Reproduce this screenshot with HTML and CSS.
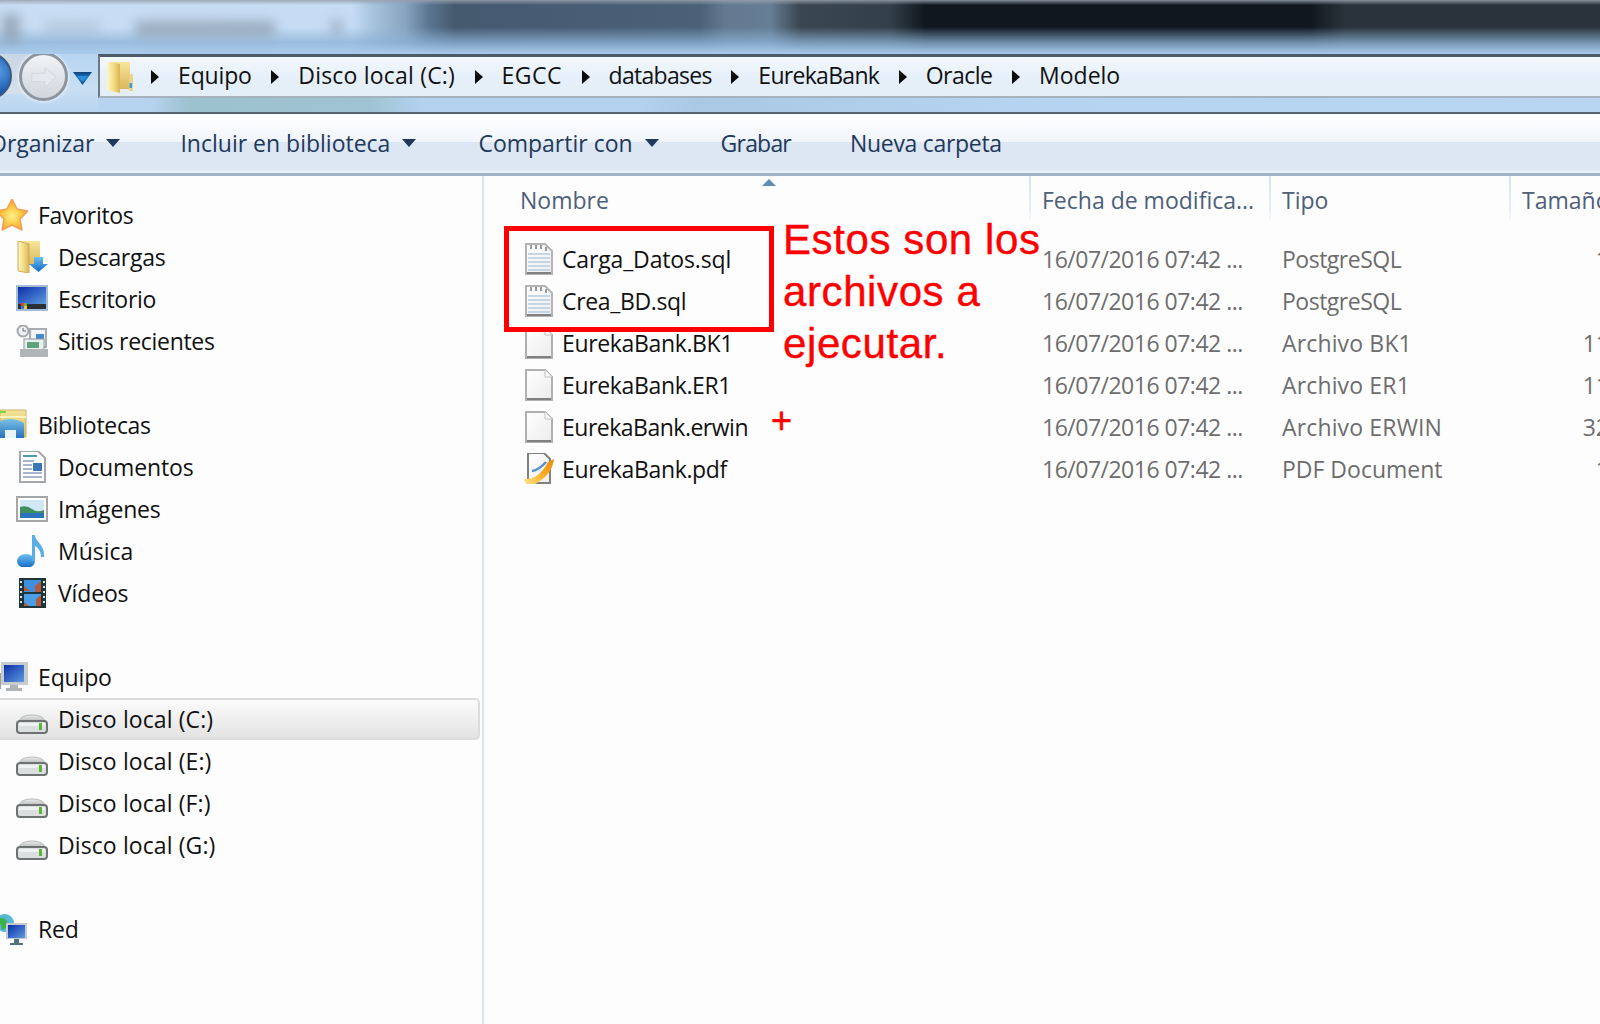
FILE: index.html
```html
<!DOCTYPE html>
<html lang="es">
<head>
<meta charset="utf-8">
<title>Modelo</title>
<link rel="stylesheet" href="styles.css">
</head>
<body>
<svg class="defs" width="0" height="0" aria-hidden="true">
  <defs>
    <linearGradient id="gFolder" x1="0" y1="0" x2="0" y2="1"><stop offset="0" stop-color="#f6e59a"/><stop offset="1" stop-color="#dcb75c"/></linearGradient>
    <linearGradient id="gFolderD" x1="0" y1="0" x2="1" y2="0"><stop offset="0" stop-color="#fff6c8"/><stop offset=".5" stop-color="#f4dd85"/><stop offset="1" stop-color="#d9b558"/></linearGradient>
    <radialGradient id="gStar" cx=".5" cy=".55" r=".55"><stop offset="0" stop-color="#fff28a"/><stop offset=".6" stop-color="#fcc23a"/><stop offset="1" stop-color="#f2923a"/></radialGradient>
    <linearGradient id="gScreen" x1="0" y1="0" x2="1" y2="1"><stop offset="0" stop-color="#0c2fa8"/><stop offset="1" stop-color="#5d9be0"/></linearGradient>
    <linearGradient id="gBlue" x1="0" y1="0" x2="0" y2="1"><stop offset="0" stop-color="#6cc0f2"/><stop offset="1" stop-color="#1268c4"/></linearGradient>
    <linearGradient id="gDisk" x1="0" y1="0" x2="0" y2="1"><stop offset="0" stop-color="#eeeeee"/><stop offset="1" stop-color="#a8acac"/></linearGradient>
    <linearGradient id="gPage" x1="0" y1="0" x2="1" y2="1"><stop offset="0" stop-color="#ffffff"/><stop offset="1" stop-color="#ececec"/></linearGradient>
    <linearGradient id="gSwoosh" x1="0" y1="1" x2="1" y2="0"><stop offset="0" stop-color="#ffe68a"/><stop offset=".55" stop-color="#f9a91c"/><stop offset="1" stop-color="#e98a10"/></linearGradient>
    <linearGradient id="gHist" x1="0" y1="0" x2="0" y2="1"><stop offset="0" stop-color="#10407e"/><stop offset=".45" stop-color="#1c78c4"/><stop offset="1" stop-color="#0f4a8c"/></linearGradient>
    <symbol id="i-star" viewBox="0 0 32 32"><path d="M16 0 L21 10 L32 12 L24 20 L26 31 L16 26 L6 31 L8 20 L0 12 L11 10 Z" fill="url(#gStar)" stroke="#f0a05a" stroke-width="1.500" stroke-linejoin="round"/></symbol>
    <symbol id="i-dl" viewBox="0 0 32 32"><path d="M2 0H24V24H2Z" fill="url(#gFolder)"/><path d="M2 0L13 3V32L2 30Z" fill="url(#gFolderD)" stroke="#cfae5c"/><path d="M18 16H27V23H32L22.500 31L13 23H18Z" fill="url(#gBlue)"/></symbol>
    <symbol id="i-desk" viewBox="0 0 32 32"><rect x="0" y="2" width="32" height="26" fill="#a7bdd6"/><rect x="2" y="4" width="28" height="17" fill="url(#gScreen)"/><rect x="2" y="21" width="28" height="5" fill="#2b2f36"/><rect x="5" y="20" width="3" height="3" fill="#e8402a"/><rect x="8" y="20" width="3" height="3" fill="#62b83a"/><rect x="5" y="23" width="3" height="3" fill="#2f7be0"/><rect x="8" y="23" width="3" height="3" fill="#f4c52a"/></symbol>
    <symbol id="i-recent" viewBox="0 0 32 32"><rect x="14" y="4" width="16" height="18" fill="#f2f5f7" stroke="#a8adb0" stroke-width="2"/><rect x="20" y="9" width="8" height="5" fill="#3f8ad0"/><circle cx="7" cy="6" r="5.500" fill="#eef0f2" stroke="#a4a8ab" stroke-width="2"/><path d="M7 3V6H10" fill="none" stroke="#6a6e72"/><rect x="8" y="14" width="20" height="11" fill="#e8f0f0" stroke="#8e9698"/><rect x="11" y="17" width="12" height="6" fill="#5fa27c"/><rect x="4" y="24" width="28" height="8" fill="#b2b5b7"/></symbol>
    <symbol id="i-lib" viewBox="0 0 32 32"><path d="M4 1H30V28H4Z" fill="url(#gFolder)" stroke="#cbb26a"/><rect x="4" y="2" width="6" height="2" fill="#7ad83a"/><path d="M4 8H30" stroke="#fff4c0" stroke-width="2"/><path d="M0 14Q14 6 28 14V29H20V21H9V29H0Z" fill="url(#gBlue)" opacity=".9"/><path d="M9 21H20V29H9Z" fill="#e9f3fb"/></symbol>
    <symbol id="i-docs" viewBox="0 0 32 32"><path d="M4 0H22L29 7V31H4Z" fill="#fff" stroke="#a4a8ae" stroke-width="2"/><rect x="7" y="4" width="14" height="2" fill="#4f9aa8"/><path d="M7 10H18M7 14H16M7 18H16M7 22H26M7 26H26" stroke="#aab4d0" stroke-width="2"/><rect x="17" y="12" width="9" height="8" fill="#3a78b4"/></symbol>
    <symbol id="i-img" viewBox="0 0 32 32"><rect x="1" y="4" width="30" height="24" fill="#fff" stroke="#a4a6a8" stroke-width="2"/><rect x="4" y="7" width="24" height="18" fill="#cfe8f6"/><path d="M4 14Q11 12 16 16T28 17V21H4Z" fill="#3f8f5e"/><rect x="4" y="20" width="24" height="5" fill="#2a73bc"/></symbol>
    <symbol id="i-music" viewBox="0 0 32 32"><ellipse cx="10" cy="26" rx="9" ry="7" fill="url(#gBlue)"/><path d="M16 0H19C19 7 29 9 28 22H25C25 15 21 12 19 11V26H16Z" fill="#58aee6"/></symbol>
    <symbol id="i-vid" viewBox="0 0 32 32"><rect x="3" y="1" width="27" height="30" fill="#1f3538"/><rect x="8" y="3" width="17" height="12" fill="#3f8fe0"/><rect x="8" y="17" width="17" height="12" fill="#4a9ee8"/><path d="M8 9L14 14H8ZM19 9L25 4V15H19ZM8 25L13 29H8ZM20 22L25 18V29H20Z" fill="#b45a3a"/><path d="M5 4V28M28 4V28" stroke="#d8e4e4" stroke-width="2" stroke-dasharray="2 3"/></symbol>
    <symbol id="i-pc" viewBox="0 0 32 32"><rect x="0" y="12" width="5" height="16" fill="#9aa0a0"/><rect x="5" y="1" width="27" height="23" fill="#c8ccce"/><rect x="8" y="4" width="20" height="17" fill="url(#gScreen)"/><path d="M14 24H22V27H26V30H10V27H14Z" fill="#b0b4b6"/></symbol>
    <symbol id="i-net" viewBox="0 0 32 32"><circle cx="9" cy="10" r="9" fill="#59b8d8"/><path d="M3 5Q9 4 11 9T6 17Z" fill="#3cb04a"/><rect x="10" y="10" width="21" height="16" fill="#c4cace"/><rect x="12" y="12" width="17" height="13" fill="url(#gScreen)"/><path d="M18 26H23V30H27V32H14V30H18Z" fill="#54707e"/></symbol>
    <symbol id="i-disk" viewBox="0 0 32 32"><path d="M3 20Q3 12 16 12T29 20Z" fill="url(#gDisk)" stroke="#b8bcbc"/><rect x="1" y="18" width="30" height="12" rx="3" fill="#dcdfdf" stroke="#6e7272" stroke-width="2"/><rect x="3" y="20" width="26" height="3" fill="#f0f2f2"/><rect x="23" y="20" width="3" height="7" fill="#58b836"/></symbol>
    <symbol id="i-sql" viewBox="0 0 32 32"><path d="M3 1H22L29 8V31H3Z" fill="url(#gPage)" stroke="#b4b4b4" stroke-width="2"/><path d="M4 30H28" stroke="#808080" stroke-width="2"/><path d="M8 2V6M13 2V6M18 2V6M23 4V8" stroke="#9a9a9a" stroke-width="2"/><path d="M5 11H27M5 15H27M5 19H27M5 23H27M5 27H27" stroke="#c5d7e4" stroke-width="2"/></symbol>
    <symbol id="i-file" viewBox="0 0 32 32"><path d="M3 1H22L29 8V31H3Z" fill="url(#gPage)" stroke="#b0b0b0" stroke-width="2"/><path d="M4 30H28" stroke="#808080" stroke-width="2"/><path d="M22 1V8H29" fill="#f8f8f8" stroke="#c4c4c4"/></symbol>
    <symbol id="i-pdf" viewBox="0 0 32 32"><path d="M5 0H21L27 6V30H5Z" fill="url(#gPage)" stroke="#808080" stroke-width="2"/><path d="M1 26Q16 27 25 9L31 6Q29 22 12 31L3 31Z" fill="url(#gSwoosh)"/><path d="M9 18Q16 17 23 9" fill="none" stroke="#5a90d0" stroke-width="2.500"/></symbol>
  </defs>
</svg>

<div class="window">
  <div class="titlebar">
    <span class="ghost ghost-a"></span>
    <span class="ghost ghost-d"></span>
    <span class="ghost ghost-b"></span>
    <span class="ghost ghost-c"></span>
  </div>

  <div class="navrow">
    <div class="navbtns">
      <span class="back"></span>
      <span class="forward">
        <svg viewBox="0 0 32 32" class="fwd-arrow"><path d="M3 12H17V6L29 16L17 27V21H3Z" fill="#e4e9ee" stroke="#cfd6dc"/></svg>
      </span>
      <svg class="history" viewBox="0 0 19 13"><path d="M0 0H19L9.500 13Z" fill="url(#gHist)"/><path d="M4 4H15L9.500 10Z" fill="#2a90dc"/></svg>
    </div>
    <div class="address">
      <svg class="addr-folder" viewBox="0 0 27 32"><path d="M3 1H24V28H3Z" fill="url(#gFolder)"/><rect x="23" y="13" width="4" height="17" fill="#e9d48a"/><rect x="23.500" y="22" width="2.500" height="5" fill="#3f9ad8"/><path d="M1 1L14 3V32L1 29Z" fill="url(#gFolderD)"/></svg>
      <span class="crumb-arrow"></span><span class="crumb sp-soft">Equipo</span>
      <span class="crumb-arrow"></span><span class="crumb sp-wide">Disco local (C:)</span>
      <span class="crumb-arrow"></span><span class="crumb sp-wider">EGCC</span>
      <span class="crumb-arrow"></span><span class="crumb sp-narrow">databases</span>
      <span class="crumb-arrow"></span><span class="crumb sp-narrow">EurekaBank</span>
      <span class="crumb-arrow"></span><span class="crumb sp-tight">Oracle</span>
      <span class="crumb-arrow"></span><span class="crumb">Modelo</span>
    </div>
  </div>

  <div class="toolbar">
    <span class="tool tool-org">Organizar<i class="caret"></i></span>
    <span class="tool tool-lib">Incluir en biblioteca<i class="caret"></i></span>
    <span class="tool tool-share">Compartir con<i class="caret"></i></span>
    <span class="tool tool-burn">Grabar</span>
    <span class="tool tool-new">Nueva carpeta</span>
  </div>

  <div class="main">
    <nav class="sidebar">
      <div class="group">
        <div class="row head"><svg class="ico"><use href="#i-star"/></svg><span>Favoritos</span></div>
        <div class="row"><svg class="ico"><use href="#i-dl"/></svg><span>Descargas</span></div>
        <div class="row"><svg class="ico"><use href="#i-desk"/></svg><span>Escritorio</span></div>
        <div class="row"><svg class="ico"><use href="#i-recent"/></svg><span>Sitios recientes</span></div>
      </div>
      <div class="group">
        <div class="row head"><svg class="ico"><use href="#i-lib"/></svg><span>Bibliotecas</span></div>
        <div class="row"><svg class="ico"><use href="#i-docs"/></svg><span class="sp-soft">Documentos</span></div>
        <div class="row"><svg class="ico"><use href="#i-img"/></svg><span class="sp-soft">Imágenes</span></div>
        <div class="row"><svg class="ico"><use href="#i-music"/></svg><span class="sp-none">Música</span></div>
        <div class="row"><svg class="ico"><use href="#i-vid"/></svg><span class="sp-soft">Vídeos</span></div>
      </div>
      <div class="group">
        <div class="row head"><svg class="ico"><use href="#i-pc"/></svg><span class="sp-soft">Equipo</span></div>
        <div class="row selected"><svg class="ico"><use href="#i-disk"/></svg><span class="sp-wide-s">Disco local (C:)</span></div>
        <div class="row"><svg class="ico"><use href="#i-disk"/></svg><span class="sp-wide-s">Disco local (E:)</span></div>
        <div class="row"><svg class="ico"><use href="#i-disk"/></svg><span class="sp-wide-s">Disco local (F:)</span></div>
        <div class="row"><svg class="ico"><use href="#i-disk"/></svg><span class="sp-wide-s">Disco local (G:)</span></div>
      </div>
      <div class="group">
        <div class="row head"><svg class="ico"><use href="#i-net"/></svg><span class="sp-soft">Red</span></div>
      </div>
    </nav>

    <section class="list">
      <div class="cols header">
        <div class="col col-name">Nombre<i class="sort"></i></div>
        <div class="col">Fecha de modifica...</div>
        <div class="col">Tipo</div>
        <div class="col">Tamaño</div>
      </div>
      <div class="cols file"><div class="fname"><svg class="ico"><use href="#i-sql"/></svg><span class="sp-soft">Carga_Datos.sql</span></div><div class="cell date">16/07/2016 07:42 ...</div><div class="cell type-pg">PostgreSQL</div><div class="cell size">12 KB</div></div>
      <div class="cols file"><div class="fname"><svg class="ico"><use href="#i-sql"/></svg><span>Crea_BD.sql</span></div><div class="cell date">16/07/2016 07:42 ...</div><div class="cell type-pg">PostgreSQL</div><div class="cell size">6 KB</div></div>
      <div class="cols file"><div class="fname"><svg class="ico"><use href="#i-file"/></svg><span>EurekaBank.BK1</span></div><div class="cell date">16/07/2016 07:42 ...</div><div class="cell type-ar">Archivo BK1</div><div class="cell size">112 KB</div></div>
      <div class="cols file"><div class="fname"><svg class="ico"><use href="#i-file"/></svg><span>EurekaBank.ER1</span></div><div class="cell date">16/07/2016 07:42 ...</div><div class="cell type-ar">Archivo ER1</div><div class="cell size">112 KB</div></div>
      <div class="cols file"><div class="fname"><svg class="ico"><use href="#i-file"/></svg><span class="sp-erwin">EurekaBank.erwin</span></div><div class="cell date">16/07/2016 07:42 ...</div><div class="cell type-ar">Archivo ERWIN</div><div class="cell size">324 KB</div></div>
      <div class="cols file"><div class="fname"><svg class="ico"><use href="#i-pdf"/></svg><span>EurekaBank.pdf</span></div><div class="cell date">16/07/2016 07:42 ...</div><div class="cell">PDF Document</div><div class="cell size">18 KB</div></div>
    </section>
  </div>

  <div class="redbox"></div>
  <div class="note">Estos son los<br>archivos a<br>ejecutar.</div>
  <div class="plus">+</div>
</div>
</body>
</html>
```

FILE: styles.css
```css
html, body {
  margin: 0;
  padding: 0;
  width: 1600px;
  height: 1024px;
  overflow: hidden;
  background: #fdfdfd;
}

.defs { position: absolute; }

.window {
  position: relative;
  width: 1600px;
  height: 1024px;
  overflow: hidden;
  display: flex;
  flex-direction: column;
  font-family: "Open Sans", "Noto Sans", sans-serif;
  font-size: 23px;
  color: #111;
}

/* blurred desktop behind the glass title bar */
.titlebar {
  position: relative;
  flex: 0 0 54px;
  overflow: hidden;
  background:
    linear-gradient(to bottom, rgba(150, 160, 172, .85) 0, rgba(200, 222, 245, 0) 5px),
    linear-gradient(to bottom, rgba(168, 200, 232, 0) 50%, rgba(140, 178, 214, .75) 78%, #a9cbec 100%),
    linear-gradient(to right, #c9def4 0, #c5dcf4 352px, #a9c4de 372px, #88a4c0 405px, #5a7490 430px, #45596f 455px, #4a6178 700px, #62798f 725px, #667e96 770px, #3a4650 800px, #333f49 890px, #10171f 925px, #10171f 1310px, #2a333b 1345px, #2a333b 1600px);
}

.ghost {
  position: absolute;
  background: #8a9aac;
  filter: blur(6px);
  opacity: .75;
}
.ghost-a { left: 2px; top: 14px; width: 18px; height: 28px; }
.ghost-d { left: 44px; top: 22px; width: 56px; height: 10px; opacity: .35; }
.ghost-b { left: 135px; top: 21px; width: 140px; height: 15px; }
.ghost-c { left: 332px; top: 20px; width: 10px; height: 14px; }

.navrow {
  flex: 0 0 58px;
  display: flex;
  background:
    linear-gradient(to right, #b6d3f0 0, #b6d3f0 150px, #9cc1cf 190px, #9fc3d2 370px, #b2d2f0 420px, #b2d2f0 640px, #a8c8e4 700px, #b5d4f1 1000px, #b8d6f2 1600px);
}

.navbtns {
  flex: 0 0 98px;
  display: flex;
  align-items: flex-start;
  background:
    linear-gradient(to bottom, #c9d6e3, #d6e0ea) 0 0 / 32px 40px no-repeat,
    linear-gradient(to bottom, #b6d4f1, #c9dff3 60%, #b8d5f0);
  overflow: hidden;
}

.back {
  flex: 0 0 48px;
  height: 48px;
  margin: -2px 0 0 -36px;
  box-sizing: border-box;
  border-radius: 50%;
  border: 2px solid #3c5a80;
  background: radial-gradient(circle at 70% 40%, #5aa0e4, #1250a8 60%, #0b2f74);
}

.forward {
  flex: 0 0 49px;
  height: 49px;
  margin: -2px 0 0 7px;
  box-sizing: border-box;
  border-radius: 50%;
  border: 3px solid #8d969f;
  background: linear-gradient(to bottom, #f1f4f7, #cfd6dd);
  box-shadow: 0 0 3px 1px rgba(255, 255, 255, .7);
  display: flex;
  align-items: center;
  justify-content: center;
}
.fwd-arrow { width: 30px; height: 30px; }

.history {
  flex: none;
  width: 19px;
  height: 13px;
  margin: 18px 0 0 5px;
}

.address {
  flex: 1;
  height: 44px;
  box-sizing: border-box;
  padding-bottom: 4px;
  border-top: 3px solid #4e5a66;
  border-left: 2px solid #6e7882;
  border-bottom: 2px solid #a8b2ba;
  display: flex;
  align-items: center;
  background: linear-gradient(to bottom, #f4f8fc 0, #e6f0fa 50%, #e4eef6 100%);
}

.addr-folder { width: 27px; height: 32px; margin: 4px 18px 0 6px; flex: none; }

.crumb-arrow {
  flex: none;
  width: 0;
  height: 0;
  margin-top: 4px;
  border-top: 7px solid transparent;
  border-bottom: 7px solid transparent;
  border-left: 8px solid #0c0c0c;
}

.crumb { margin: 0 19.500px 0 19px; white-space: nowrap; color: #111; }

/* letter-spacing tuned to the hinted widths of the original font */
.sp-wider { letter-spacing: .5px; }
.sp-wide { letter-spacing: .2px; }
.sp-wide-s { letter-spacing: .1px; }
.sp-none { letter-spacing: 0; }
.sp-soft { letter-spacing: -.15px; }
.sp-tight { letter-spacing: -.5px; }
.sp-narrow { letter-spacing: -.7px; }
.sp-erwin { letter-spacing: -.5px; }

.toolbar {
  flex: 0 0 64px;
  box-sizing: border-box;
  padding-bottom: 2px;
  border-top: 2px solid #566373;
  border-bottom: 3px solid #a3b3c8;
  display: flex;
  align-items: center;
  color: #1e395b;
  background: linear-gradient(to bottom, #ffffff 0, #f0f5fb 48%, #dde6f3 48%, #dde6f3 95%, #e9eff7 95%);
}

.tool { white-space: nowrap; display: flex; align-items: center; }
.tool-org { margin-left: -11px; }
.tool-lib { margin-left: 60px; }
.tool-share { margin-left: 62px; }
.tool-burn { margin-left: 62px; letter-spacing: -.8px; }
.tool-new { margin-left: 59px; letter-spacing: -.3px; }

.caret {
  width: 0;
  height: 0;
  margin-left: 12px;
  border-left: 7.500px solid transparent;
  border-right: 7.500px solid transparent;
  border-top: 8px solid #1e395b;
}

.main { flex: 1; display: flex; min-height: 0; background: #fdfdfd; }

.sidebar {
  flex: 0 0 484px;
  box-sizing: border-box;
  border-right: 2px solid #d6e4f4;
  padding-top: 18px;
  display: flex;
  flex-direction: column;
  gap: 42px;
}

.row {
  height: 42px;
  box-sizing: border-box;
  display: flex;
  align-items: center;
  gap: 10px;
  padding-left: 16px;
  margin-right: 2px;
  white-space: nowrap;
  letter-spacing: -.3px;
}
.row.head { padding-left: 0; }
.row.head .ico { margin-left: -4px; }

.row.selected {
  border: 2px solid #dcdcdc;
  border-left: 0;
  border-radius: 0 5px 5px 0;
  background: linear-gradient(to bottom, #fbfbfb, #e3e3e3);
}

.ico { width: 32px; height: 32px; flex: none; }

.list { flex: 1; min-width: 0; overflow: hidden; }

.cols {
  display: grid;
  grid-template-columns: 545px 240px 240px 148px;
}

.header {
  height: 46px;
  margin-bottom: 16px;
  color: #4c607a;
}
.col {
  position: relative;
  display: flex;
  align-items: center;
  padding: 8px 0 6px 11px;
  border-left: 2px solid transparent;
  border-image: linear-gradient(to bottom, #d6e4f4 0, #e4edf7 70%, #fdfdfd 100%) 1;
  white-space: nowrap;
}
.col-name { padding-left: 36px; border-left: 0; }
.sort {
  position: absolute;
  left: 278px;
  top: 3px;
  width: 0;
  height: 0;
  border-left: 7px solid transparent;
  border-right: 7px solid transparent;
  border-bottom: 7px solid #5d8fb4;
}

.file { height: 42px; align-items: center; color: #6d6d6d; }
.fname {
  display: flex;
  align-items: center;
  gap: 7px;
  padding-left: 39px;
  color: #111;
  white-space: nowrap;
  letter-spacing: -.35px;
}
.cell { padding-left: 13px; white-space: nowrap; }
.cell.date { letter-spacing: -.5px; }
.cell.type-pg { letter-spacing: -.5px; }
.cell.type-ar { letter-spacing: .15px; }
.cell.size { padding-left: 0; text-align: right; }

.redbox {
  position: absolute;
  left: 504px;
  top: 226px;
  width: 270px;
  height: 106px;
  box-sizing: border-box;
  border: 5px solid #ff0000;
}

.note {
  position: absolute;
  left: 783px;
  top: 214px;
  font-family: "Liberation Sans", Arial, sans-serif;
  font-size: 42px;
  line-height: 52px;
  letter-spacing: .6px;
  -webkit-text-stroke: .4px #ff0000;
  color: #ff0000;
  white-space: nowrap;
}

.plus {
  position: absolute;
  left: 771px;
  top: 400px;
  font-family: "Liberation Sans", Arial, sans-serif;
  font-size: 36px;
  line-height: 42px;
  -webkit-text-stroke: .6px #ff0000;
  color: #ff0000;
}
```
